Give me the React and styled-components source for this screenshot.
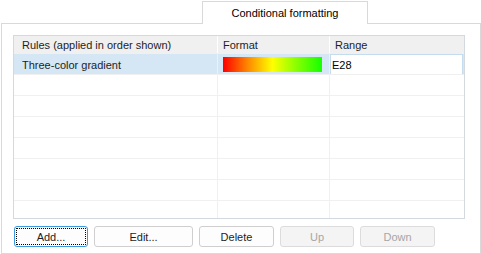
import React from "react";
import styled, { createGlobalStyle } from "styled-components";

const Global = createGlobalStyle`
  html, body { margin: 0; padding: 0; background: #ffffff; }
  body { font-family: "Liberation Sans", Arial, sans-serif; font-size: 11px; color: #1e1e1e; }
  * { box-sizing: border-box; }
`;

const Page = styled.div`
  width: 481px;
  height: 254px;
  display: flex;
  flex-direction: column;
`;

const TabStrip = styled.div`
  display: flex;
  height: 23px;
  padding-left: 202px;
  padding-top: 1px;
`;

const Tab = styled.div`
  width: 166px;
  height: 23px;
  border: 1px solid #d9d9d9;
  border-bottom: none;
  background: #ffffff;
  display: flex;
  align-items: center;
  justify-content: center;
  color: #000;
  position: relative;
  z-index: 1;
  margin-bottom: -1px;
  padding-bottom: 1px;
`;

const Panel = styled.div`
  margin-left: 1px;
  width: 480px;
  height: 231px;
  border: 1px solid #d9d9d9;
  background: #ffffff;
  padding: 11px 0 0 11px;
  display: flex;
  flex-direction: column;
  gap: 7px;
`;

const Grid = styled.div`
  width: 452px;
  height: 184px;
  border: 1px solid #d3d9df;
  overflow: hidden;
  display: flex;
  flex-direction: column;
`;

const Row = styled.div`
  display: grid;
  grid-template-columns: 204px 112px 1fr;
  height: ${(p) => (p.$header ? 18 : 21)}px;
  flex-shrink: 0;
  background: ${(p) => (p.$header ? "#f0f0f0" : p.$selected ? "#d5e6f4" : "#ffffff")};
  border-bottom: 1px solid #f0f0f0;
`;

const Cell = styled.div`
  display: flex;
  align-items: center;
  padding-left: ${(p) => p.$pad ?? 8}px;
  padding-top: 1px;
  border-right: ${(p) => (p.$last ? "none" : p.$header ? "1px solid #ffffff" : "1px solid #f0f0f0")};
  white-space: nowrap;
  overflow: hidden;
`;

const GradientBar = styled.div`
  width: 99px;
  height: 15px;
  background: linear-gradient(to right, #ff0000 0%, #ff8800 25%, #ffff00 50%, #9cff00 70%, #14ff00 100%);
`;

const EditBox = styled.div`
  width: 133px;
  height: 21px;
  margin-top: -1px;
  border: 1px solid #c5dcef;
  background: #ffffff;
  display: flex;
  align-items: center;
  padding-left: 1px;
  padding-top: 1px;
  color: #000;
`;

const ButtonRow = styled.div`
  display: flex;
  gap: 6px;
  padding-left: 1px;
`;

const Button = styled.button`
  width: ${(p) => p.$w}px;
  height: 21px;
  font-family: inherit;
  font-size: 11px;
  border-radius: 3px;
  border: 1px solid ${(p) => (p.$focus ? "#3c9ae0" : p.disabled ? "#dcdcdc" : "#cfcfcf")};
  background: ${(p) => (p.disabled ? "#f4f4f4" : "#fdfdfd")};
  color: ${(p) => (p.disabled ? "#a6a6a6" : "#1e1e1e")};
  outline: ${(p) => (p.$focus ? "1px dotted #000" : "none")};
  outline-offset: -3px;
  padding: 0;
  display: flex;
  align-items: center;
  justify-content: center;
`;

const rows = Array.from({ length: 8 });

export default function App() {
  return (
    <Page>
      <Global />
      <TabStrip>
        <Tab>Conditional formatting</Tab>
      </TabStrip>
      <Panel>
        <Grid>
          <Row $header>
            <Cell $header>Rules (applied in order shown)</Cell>
            <Cell $header $pad={5}>Format</Cell>
            <Cell $header $last $pad={5}>Range</Cell>
          </Row>
          {rows.map((_, i) =>
            i === 0 ? (
              <Row key={i} $selected>
                <Cell>Three-color gradient</Cell>
                <Cell $pad={5}><GradientBar /></Cell>
                <Cell $last $pad={0}><EditBox>E28</EditBox></Cell>
              </Row>
            ) : (
              <Row key={i}>
                <Cell />
                <Cell />
                <Cell $last />
              </Row>
            )
          )}
        </Grid>
        <ButtonRow>
          <Button $w={74} $focus>Add...</Button>
          <Button $w={99}>Edit...</Button>
          <Button $w={75}>Delete</Button>
          <Button $w={74} disabled>Up</Button>
          <Button $w={75} disabled>Down</Button>
        </ButtonRow>
      </Panel>
    </Page>
  );
}
